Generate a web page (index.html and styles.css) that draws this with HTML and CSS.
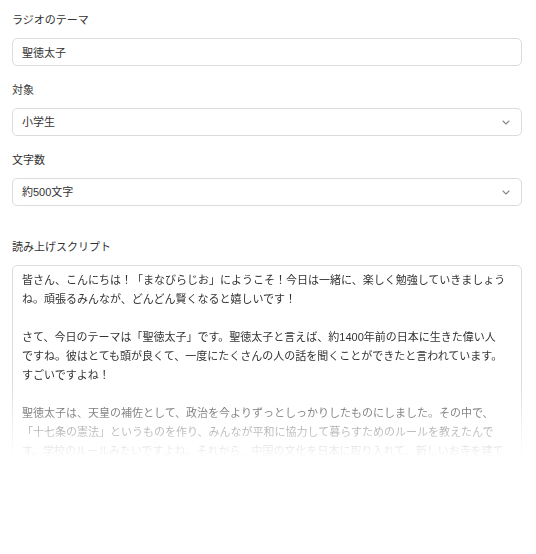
FILE: index.html
```html
<!DOCTYPE html>
<html lang="ja">
<head>
  <meta charset="utf-8" />
  <title>まなびらじお</title>
  <meta name="viewport" content="width=device-width, initial-scale=1.0">
  <link rel="stylesheet" href="styles.css">
</head>
<body>
  <form class="radio-form">
    <div class="field">
      <label for="theme">ラジオのテーマ</label>
      <input type="text" id="theme" value="聖徳太子" />
    </div>
    <div class="field">
      <label for="target">対象</label>
      <div class="select-wrap">
        <select id="target">
          <option>小学生</option>
          <option>中学生</option>
          <option>高校生</option>
        </select>
        <svg class="chevron" width="8" height="5" viewBox="0 0 8 5"><path d="M1 1l3 3 3-3" fill="none" stroke="#888" stroke-width="1.1" stroke-linecap="round" stroke-linejoin="round"/></svg>
      </div>
    </div>
    <div class="field">
      <label for="length">文字数</label>
      <div class="select-wrap">
        <select id="length">
          <option>約500文字</option>
          <option>約1000文字</option>
        </select>
        <svg class="chevron" width="8" height="5" viewBox="0 0 8 5"><path d="M1 1l3 3 3-3" fill="none" stroke="#888" stroke-width="1.1" stroke-linecap="round" stroke-linejoin="round"/></svg>
      </div>
    </div>
    <div class="field script-field">
      <label id="script-label">読み上げスクリプト</label>
      <div class="script-wrap">
        <div class="script-box" role="textbox" aria-labelledby="script-label" aria-multiline="true">
          <p>皆さん、こんにちは！「まなびらじお」にようこそ！今日は一緒に、楽しく勉強していきましょう<br>ね。頑張るみんなが、どんどん賢くなると嬉しいです！</p>
          <p>さて、今日のテーマは「聖徳太子」です。聖徳太子と言えば、約1400年前の日本に生きた偉い人<br>ですね。彼はとても頭が良くて、一度にたくさんの人の話を聞くことができたと言われています。<br>すごいですよね！</p>
          <p>聖徳太子は、天皇の補佐として、政治を今よりずっとしっかりしたものにしました。その中で、<br>「十七条の憲法」というものを作り、みんなが平和に協力して暮らすためのルールを教えたんで<br>す。学校のルールみたいですよね。それから、中国の文化を日本に取り入れて、新しいお寺を建て</p>
        </div>
      </div>
    </div>
  </form>
</body>
</html>
```

FILE: styles.css
```css
:root {
  --border: #dcdcdc;
  --text: #333;
}
html, body {
  margin: 0;
  padding: 0;
  background: #fff;
  color: var(--text);
  font-family: 'Liberation Sans', 'Noto Sans CJK JP', sans-serif;
  font-size: 11px;
}
.radio-form {
  display: flex;
  flex-direction: column;
  gap: 16px;
  padding: 12px 14px 0 12px;
}
.field {
  display: flex;
  flex-direction: column;
  gap: 10px;
}
.script-field {
  margin-top: 17px;
}
label {
  line-height: 16px;
  color: var(--text);
}
input, select, .script-box {
  box-sizing: border-box;
  width: 100%;
  font-family: inherit;
  font-size: 11px;
  color: var(--text);
  background: #fff;
  border: 1px solid var(--border);
  border-radius: 5px;
  outline: none;
}
input, select {
  height: 28px;
  padding: 0 9px;
}
select {
  appearance: none;
  -webkit-appearance: none;
}
.select-wrap {
  position: relative;
}
.chevron {
  position: absolute;
  right: 12px;
  top: 12px;
  pointer-events: none;
}
/* the script box fades out towards the bottom */
.script-wrap {
  height: 193px;
  overflow: hidden;
  -webkit-mask-image: linear-gradient(to bottom, #000 0, #000 118px, rgba(0,0,0,0.6) 148px, rgba(0,0,0,0.32) 167px, rgba(0,0,0,0.07) 186px, transparent 193px);
  mask-image: linear-gradient(to bottom, #000 0, #000 118px, rgba(0,0,0,0.6) 148px, rgba(0,0,0,0.32) 167px, rgba(0,0,0,0.07) 186px, transparent 193px);
}
.script-box {
  height: 230px;
  padding: 5px 9px;
  line-height: 19px;
  white-space: nowrap;
  overflow: hidden;
}
.script-box p {
  margin: 0 0 19px 0;
}
```
